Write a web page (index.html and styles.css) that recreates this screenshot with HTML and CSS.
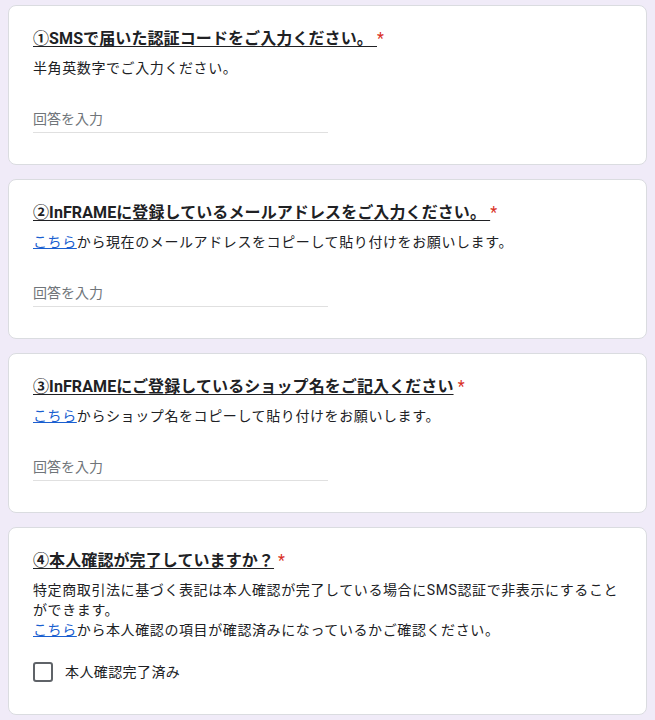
FILE: index.html
```html
<!DOCTYPE html>
<html lang="ja">
<head>
<meta charset="utf-8">
<title>フォーム</title>
<link rel="stylesheet" href="styles.css">
</head>
<body>
<main class="form">
  <section class="card">
    <div class="title"><u>①SMSで届いた認証コードをご入力ください。 </u><span class="req">*</span></div>
    <div class="desc">半角英数字でご入力ください。</div>
    <div class="input">回答を入力</div>
  </section>
  <section class="card">
    <div class="title"><u>②InFRAMEに登録しているメールアドレスをご入力ください。 </u><span class="req">*</span></div>
    <div class="desc"><a href="#">こちら</a>から現在のメールアドレスをコピーして貼り付けをお願いします。</div>
    <div class="input">回答を入力</div>
  </section>
  <section class="card">
    <div class="title"><u>③InFRAMEにご登録しているショップ名をご記入ください</u> <span class="req">*</span></div>
    <div class="desc"><a href="#">こちら</a>からショップ名をコピーして貼り付けをお願いします。</div>
    <div class="input">回答を入力</div>
  </section>
  <section class="card card-check">
    <div class="title"><u>④本人確認が完了していますか？</u> <span class="req">*</span></div>
    <div class="desc">特定商取引法に基づく表記は本人確認が完了している場合にSMS認証で非表示にすること<br>ができます。<br><a href="#">こちら</a>から本人確認の項目が確認済みになっているかご確認ください。</div>
    <label class="check"><span class="box"></span><span class="check-label">本人確認完了済み</span></label>
  </section>
</main>
</body>
</html>
```
FILE: styles.css
```css
html, body {
  background: #f0ebf8;
}
body {
  margin: 5px 8px;
  font-family: Roboto, "Noto Sans CJK JP", sans-serif;
  color: #202124;
}
.form {
  display: flex;
  flex-direction: column;
  gap: 14px;
}
.card {
  background: #fff;
  border: 1px solid #dadce0;
  border-radius: 8px;
  padding: 21px 24px 31px;
}
.card-check {
  padding-bottom: 32px;
}
.title {
  font-size: 16px;
  line-height: 24px;
  font-weight: 700;
  letter-spacing: 0.1px;
}
.title u {
  text-decoration-thickness: 1px;
  text-underline-offset: 2px;
}
.req {
  color: #d93025;
  font-weight: 400;
}
.desc {
  margin-top: 7px;
  font-size: 14px;
  line-height: 20px;
  letter-spacing: 0.6px;
}
.desc a {
  color: #1a5fd0;
  text-decoration: underline;
}
.input {
  margin-top: 31px;
  width: 50%;
  font-size: 14px;
  line-height: 20px;
  color: #70757a;
  padding-bottom: 3px;
  border-bottom: 1px solid #e0e0e0;
}
.check {
  margin-top: 22px;
  display: flex;
  align-items: center;
  gap: 12px;
}
.box {
  width: 20px;
  height: 20px;
  box-sizing: border-box;
  border: 2px solid #5f6368;
  border-radius: 3px;
}
.check-label {
  font-size: 14px;
  line-height: 20px;
  letter-spacing: 0.4px;
}
```
